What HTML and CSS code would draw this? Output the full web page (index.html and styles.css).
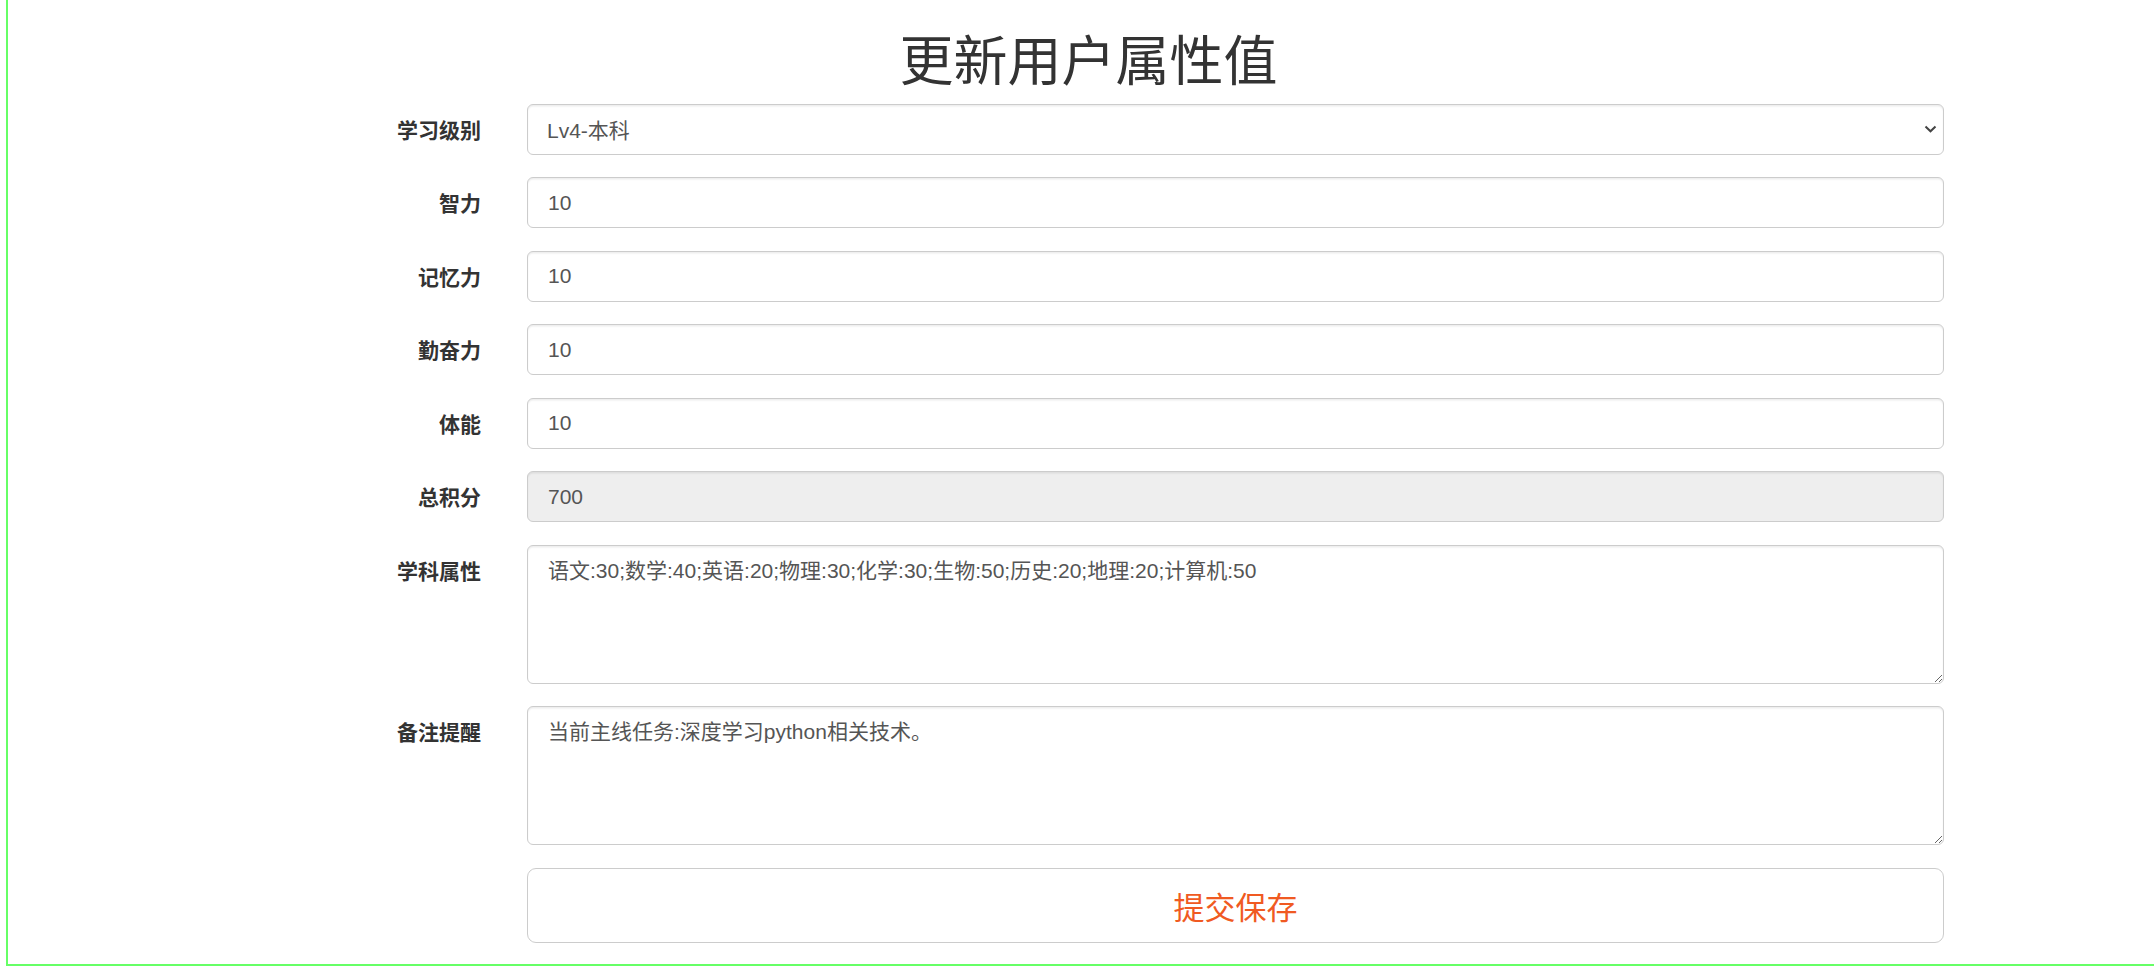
FILE: index.html
```html
<!DOCTYPE html>
<html lang="zh-CN">
<head>
  <meta charset="UTF-8">
  <meta name="viewport" content="width=device-width, initial-scale=1.0">
  <title>更新用户属性值</title>
  <link rel="stylesheet" href="styles.css">
</head>
<body>
  <div class="page">
    <div class="form__wrap">
      <h1 class="form__title">更新用户属性值</h1>
      <form class="form">
        <div class="form__group">
          <label class="form__label">学习级别</label>
          <div class="form__control form__select">
            <span>Lv4-本科</span>
            <svg width="13" height="8" viewBox="0 0 13 8"><path d="M1.5 1.5 L6.5 6.3 L11.5 1.5" fill="none" stroke="#444" stroke-width="2"/></svg>
          </div>
        </div>
        <div class="form__group">
          <label class="form__label">智力</label>
          <input class="form__control" type="text" value="10">
        </div>
        <div class="form__group">
          <label class="form__label">记忆力</label>
          <input class="form__control" type="text" value="10">
        </div>
        <div class="form__group">
          <label class="form__label">勤奋力</label>
          <input class="form__control" type="text" value="10">
        </div>
        <div class="form__group">
          <label class="form__label">体能</label>
          <input class="form__control" type="text" value="10">
        </div>
        <div class="form__group">
          <label class="form__label">总积分</label>
          <input class="form__control" type="text" value="700" readonly>
        </div>
        <div class="form__group">
          <label class="form__label">学科属性</label>
          <textarea class="form__control form__textarea">语文:30;数学:40;英语:20;物理:30;化学:30;生物:50;历史:20;地理:20;计算机:50</textarea>
        </div>
        <div class="form__group">
          <label class="form__label">备注提醒</label>
          <textarea class="form__control form__textarea">当前主线任务:深度学习python相关技术。</textarea>
        </div>
        <div class="form__group">
          <span></span>
          <button class="form__btn" type="button">提交保存</button>
        </div>
      </form>
    </div>
  </div>
</body>
</html>
```
FILE: styles.css
```css
/* 기본 */
html, body {
  margin: 0;
  padding: 0;
  background: #fff;
  overflow: hidden;
}
body {
  font-family: "Liberation Sans", "Noto Sans CJK SC", sans-serif;
  color: #333;
}
.page {
  margin-left: 6px;
  height: 964px;
  border-left: 2px solid #66ff66;
  border-bottom: 2px solid #66ff66;
}
.form__wrap {
  width: 1755px;
  margin-left: 203px;
}
.form__title {
  margin: 0;
  padding-top: 25px;
  height: 103.5px;
  box-sizing: border-box;
  text-align: center;
  font-family: "Noto Sans CJK SC", sans-serif;
  font-size: 54px;
  font-weight: 400;
  line-height: 66px;
  color: #333;
}
.form__group {
  display: grid;
  grid-template-columns: 270px 1417px;
  column-gap: 46px;
  margin-bottom: 22.5px;
}
.form__label {
  padding-top: 12px;
  text-align: right;
  font-family: "Noto Sans CJK SC", sans-serif;
  font-size: 21px;
  font-weight: 700;
  line-height: 26px;
  color: #333;
}
.form__control {
  box-sizing: border-box;
  height: 51px;
  width: 100%;
  margin: 0;
  padding: 0 20px;
  border: 1.5px solid #ccc;
  border-radius: 6px;
  box-shadow: inset 0 1.5px 1.5px rgba(0, 0, 0, .075);
  background: #fff;
  font-family: "Liberation Sans", "Noto Sans CJK SC", sans-serif;
  font-size: 21px;
  color: #555;
  outline: none;
}
.form__control[readonly] {
  background: #eee;
}
.form__select {
  display: flex;
  align-items: center;
  justify-content: space-between;
  padding: 0 6px 0 19px;
}
.form__textarea {
  height: 139px;
  padding: 10px 20px;
  line-height: 30px;
  resize: vertical;
}
.form__btn {
  height: 75px;
  width: 100%;
  border: 1.5px solid #ccc;
  border-radius: 9px;
  background: #fff;
  font-family: "Noto Sans CJK SC", sans-serif;
  font-size: 31px;
  color: #f05a22;
  cursor: pointer;
}
```
